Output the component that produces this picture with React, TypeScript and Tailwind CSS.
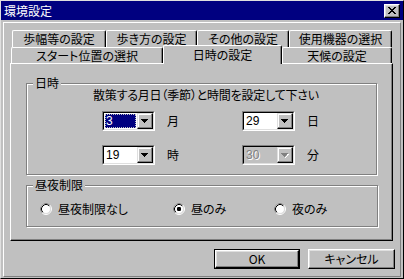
import React from "react"

const font = "font-['Noto_Sans_CJK_JP',sans-serif] [font-feature-settings:'palt']"

function CloseButton() {
  return (
    <div className="w-[16px] h-[14px] bg-[#c0c0c0] border border-t-white border-l-white border-r-black border-b-black shadow-[inset_-1px_-1px_0_#808080,inset_1px_1px_0_#dfdfdf] flex items-center justify-center">
      <svg width="8" height="7" viewBox="0 0 8 7" shapeRendering="crispEdges">
        <path d="M0 0h2v1h-2zM6 0h2v1h-2zM1 1h2v1h-2zM5 1h2v1h-2zM2 2h4v1h-4zM3 3h2v1h-2zM2 4h4v1h-4zM1 5h2v1h-2zM5 5h2v1h-2zM0 6h2v1h-2zM6 6h2v1h-2z" fill="#000" />
      </svg>
    </div>
  )
}

function BackTab({ label, width }: { label: string; width: string }) {
  return (
    <div
      className={`${width} h-full flex items-center justify-center border-t border-l border-r border-t-white border-l-white border-r-black rounded-tl-[2px] rounded-tr-[2px] shadow-[inset_-1px_0_0_#808080] text-[12px] leading-none`}
    >
      {label}
    </div>
  )
}

function Arrow({ disabled }: { disabled?: boolean }) {
  return (
    <svg width="8" height="5" viewBox="0 0 8 5" shapeRendering="crispEdges">
      {disabled && <path d="M1 1h7v1h-1v1h-1v1h-1v1h-1v-1h1v-1h1v-1h1z" fill="#fff" />}
      <path d="M0 0h7v1h-1v1h-1v1h-1v1h-1v-1h-1v-1h-1v-1h-1z" fill={disabled ? "#808080" : "#000"} />
    </svg>
  )
}

function Combo({ value, selected, disabled }: { value: string; selected?: boolean; disabled?: boolean }) {
  return (
    <div className="w-[53px] h-[20px] border border-t-[#808080] border-l-[#808080] border-r-white border-b-white">
      <div
        className={`h-full flex border border-t-black border-l-black border-r-[#dfdfdf] border-b-[#dfdfdf] ${disabled ? "bg-[#c0c0c0]" : "bg-white"}`}
      >
        <div className="flex-1 min-w-0 p-[1px] flex">
          {selected ? (
            <span className="flex-1 bg-[#000080] text-white border border-dotted border-[#c0c0c0] text-[12px] leading-[12px] font-['Liberation_Sans',sans-serif]">
              {value}
            </span>
          ) : (
            <span
              className={`flex-1 pl-[1px] text-[12px] leading-[14px] font-['Liberation_Sans',sans-serif] ${disabled ? "text-[#808080] [text-shadow:1px_1px_0_#fff]" : "text-black"}`}
            >
              {value}
            </span>
          )}
        </div>
        <div className="w-[16px] h-full bg-[#c0c0c0] border border-t-[#dfdfdf] border-l-[#dfdfdf] border-r-black border-b-black shadow-[inset_-1px_-1px_0_#808080,inset_1px_1px_0_#fff] flex items-center justify-center">
          <Arrow disabled={disabled} />
        </div>
      </div>
    </div>
  )
}

function Radio({ checked }: { checked?: boolean }) {
  return (
    <svg width="12" height="12" viewBox="0 0 12 12">
      <circle cx="6" cy="6" r="5.5" fill="none" stroke="#fff" />
      <path d="M2.11 9.89 A5.5 5.5 0 0 1 9.89 2.11" fill="none" stroke="#808080" />
      <circle cx="6" cy="6" r="4.5" fill="#fff" stroke="#dfdfdf" />
      <path d="M2.82 9.18 A4.5 4.5 0 0 1 9.18 2.82" fill="none" stroke="#000" />
      {checked && <rect x="4" y="4" width="4" height="4" rx="1.2" fill="#000" />}
    </svg>
  )
}

function Group({ title, className, children }: { title: string; className: string; children: React.ReactNode }) {
  return (
    <div className={`border border-[#808080] shadow-[inset_1px_1px_0_#fff,1px_1px_0_#fff] ${className}`}>
      <span className="block w-fit ml-[6px] -mt-[7px] px-[2px] bg-[#c0c0c0] text-[12px] leading-[12px]">{title}</span>
      {children}
    </div>
  )
}

function Button({ label, isDefault }: { label: string; isDefault?: boolean }) {
  const face = (
    <div className="h-full flex items-center justify-center bg-[#c0c0c0] border border-t-white border-l-white border-r-black border-b-black shadow-[inset_-1px_-1px_0_#808080,inset_1px_1px_0_#dfdfdf] text-[12px] leading-none">
      {label}
    </div>
  )
  return isDefault ? (
    <div className="w-[86px] h-[20px] border border-black">{face}</div>
  ) : (
    <div className="w-[87px] h-[20px]">{face}</div>
  )
}

export default function App() {
  return (
    <div className={`w-[404px] h-[279px] bg-[#c0c0c0] border border-t-[#dfdfdf] border-l-[#dfdfdf] border-r-black border-b-black flex flex-col text-black ${font}`}>
      {/* Title bar */}
      <div className="h-[19px] bg-[#000080] flex items-center justify-between pl-[3px] pr-[3px]">
        <span className="text-white text-[12px] leading-none">環境設定</span>
        <CloseButton />
      </div>

      {/* Client area */}
      <div className="flex-1 mt-[2px] ml-[2px] mr-[2px] mb-[1px] border border-t-white border-l-white border-r-[#808080] border-b-[#808080] flex flex-col">
        {/* Tab rows */}
        <div className="flex ml-[8px] mt-[7px] h-[17px]">
          <BackTab label="歩幅等の設定" width="w-[94px]" />
          <BackTab label="歩き方の設定" width="w-[91px]" />
          <BackTab label="その他の設定" width="w-[92px]" />
          <BackTab label="使用機器の選択" width="w-[103px]" />
        </div>
        <div className="flex items-end ml-[7px] h-[16px]">
          <BackTab label="スタート位置の選択" width="w-[152px]" />
          <div className="relative z-10 w-[119px] h-[19px] -mb-[1px] bg-[#c0c0c0] flex justify-center pt-[3px] border-t border-l border-r border-t-white border-l-white border-r-black rounded-tl-[2px] rounded-tr-[2px] shadow-[inset_-1px_0_0_#808080] text-[12px] leading-[12px]">
            日時の設定
          </div>
          <BackTab label="天候の設定" width="w-[110px]" />
        </div>

        {/* Tab panel */}
        <div className="ml-[6px] w-[383px] h-[178px] border border-t-white border-l-white border-r-black border-b-black shadow-[inset_-1px_-1px_0_#808080] flex flex-col">
          <Group title="日時" className="ml-[15px] mt-[19px] w-[351px] h-[92px]">
            <p className="ml-[66px] -mt-[1px] text-[12px] leading-[14px] tracking-[-0.2px]">
              散策する月日（季節）と時間を設定して下さい
            </p>
            <div className="flex ml-[75px] mt-[9px]">
              <div className="w-[140px] flex items-center">
                <Combo value="3" selected />
                <span className="ml-[12px] text-[12px]">月</span>
              </div>
              <div className="flex items-center">
                <Combo value="29" />
                <span className="ml-[12px] text-[12px]">日</span>
              </div>
            </div>
            <div className="flex ml-[75px] mt-[14px]">
              <div className="w-[140px] flex items-center">
                <Combo value="19" />
                <span className="ml-[12px] text-[12px]">時</span>
              </div>
              <div className="flex items-center">
                <Combo value="30" disabled />
                <span className="ml-[12px] text-[12px]">分</span>
              </div>
            </div>
          </Group>

          <Group title="昼夜制限" className="ml-[15px] mt-[10px] w-[352px] h-[42px]">
            <div className="flex items-center ml-[13px] mt-[11px] h-[14px] text-[12px] leading-[14px]">
              <div className="w-[133px] flex items-center gap-[6px]">
                <Radio />
                <span>昼夜制限なし</span>
              </div>
              <div className="w-[101px] flex items-center gap-[6px]">
                <Radio checked />
                <span>昼のみ</span>
              </div>
              <div className="flex items-center gap-[6px]">
                <Radio />
                <span>夜のみ</span>
              </div>
            </div>
          </Group>
        </div>

        {/* Dialog buttons */}
        <div className="flex justify-end gap-[8px] pr-[5px] mt-[8px]">
          <Button label="OK" isDefault />
          <Button label="キャンセル" />
        </div>
      </div>
    </div>
  )
}
